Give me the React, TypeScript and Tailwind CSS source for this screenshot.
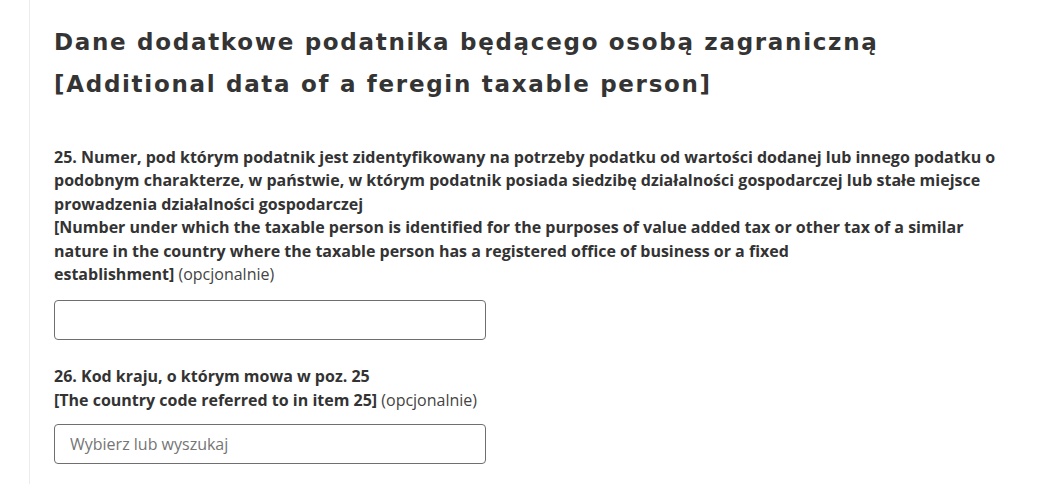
const fieldLabel = "text-base leading-[23.4px] font-bold text-[#333]";
const optional = "font-normal text-[#444]";

export default function App() {
  return (
    <div className="min-h-[484px] bg-white flex font-['Open_Sans',sans-serif]">
      <div className="w-[29px] shrink-0" />

      <section className="border-l border-[#ececec] pl-6 pt-[21px] pb-5 w-[971px]">
        {/* Nagłówek sekcji */}
        <h2 className="font-['DejaVu_Sans',sans-serif] text-[23px] leading-[42px] font-bold tracking-[1.7px] text-[#343434]">
          Dane dodatkowe podatnika będącego osobą zagraniczną
          <br />
          [Additional data of a feregin taxable person]
        </h2>

        <div className="mt-[41px]">
          <label className={fieldLabel}>
            <p>
              25. Numer, pod którym podatnik jest zidentyfikowany na potrzeby podatku od wartości
              dodanej lub innego podatku o podobnym charakterze, w państwie, w którym podatnik
              posiada siedzibę działalności gospodarczej lub stałe miejsce prowadzenia działalności
              gospodarczej
            </p>
            <p>
              [Number under which the taxable person is identified for the purposes of value added
              tax or other tax of a similar
              <br />
              nature in the country where the taxable person has a registered office of business
              or a fixed
              <br />
              establishment] <span className={optional}>(opcjonalnie)</span>
            </p>
          </label>

          <input
            type="text"
            className="mt-[14px] block w-[432px] h-10 rounded border border-[#6f6f6f] px-[15px] text-base outline-none"
          />
        </div>

        <div className="mt-[25px]">
          <label className={fieldLabel}>
            <p>26. Kod kraju, o którym mowa w poz. 25</p>
            <p>
              [The country code referred to in item 25]{" "}
              <span className={optional}>(opcjonalnie)</span>
            </p>
          </label>

          <input
            type="text"
            placeholder="Wybierz lub wyszukaj"
            className="mt-3 block w-[432px] h-10 rounded border border-[#6f6f6f] px-[15px] text-base text-[#333] placeholder:text-[#757575] outline-none"
          />
        </div>
      </section>
    </div>
  );
}
